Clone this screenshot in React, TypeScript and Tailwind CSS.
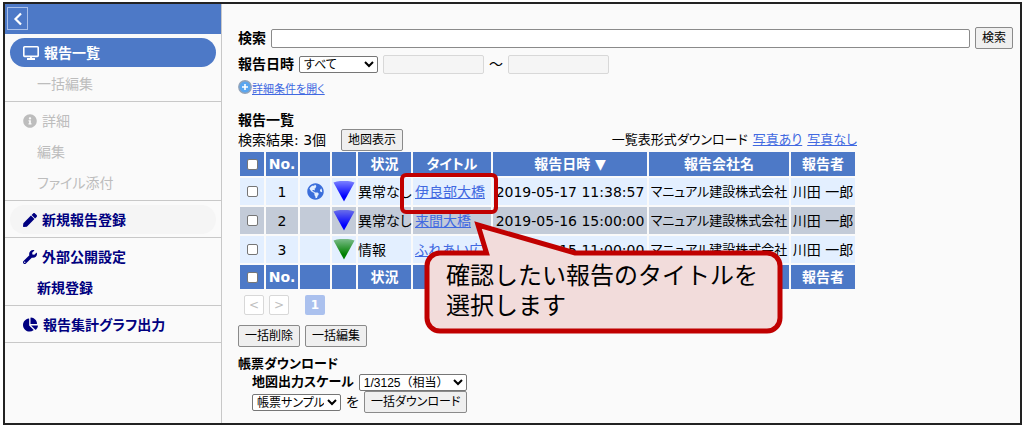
import React from 'react';
import { FaChartPie, FaGlobeAmericas, FaInfoCircle, FaPen, FaWrench } from 'react-icons/fa';
import clsx from 'clsx';

type Report = {
  no: number;
  published: boolean;
  color: string;
  status: string;
  title: string;
  date: string;
  company: string;
  reporter: string;
};

const reports: Report[] = [
  { no: 1, published: true, color: '#0000ff', status: '異常なし', title: '伊良部大橋', date: '2019-05-17 11:38:57', company: 'マニュアル建設株式会社', reporter: '川田 一郎' },
  { no: 2, published: false, color: '#0000ff', status: '異常なし', title: '来間大橋', date: '2019-05-16 15:00:00', company: 'マニュアル建設株式会社', reporter: '川田 一郎' },
  { no: 3, published: false, color: '#008000', status: '情報', title: 'ふれあい広場', date: '2019-05-15 11:00:00', company: 'マニュアル建設株式会社', reporter: '川田 一郎' },
];

const headLabels = ['No.', '', '', '状況', 'タイトル', '報告日時 ▼', '報告会社名', '報告者'];
const footLabels = ['No.', '', '', '状況', '', '', '', '報告者'];

const buttonClass = 'h-[22px] rounded-[2px] border border-[#8a8a8a] bg-[#efefef] px-[6px] text-xs leading-none text-black';
const selectClass =
  "h-[17px] rounded-[2px] border border-[#767676] bg-white text-xs leading-none text-black font-['Liberation_Sans','Noto_Sans_CJK_JP',sans-serif]";
const linkClass = 'text-[#4169e1] underline';
const checkboxClass = 'block mx-auto size-[11px] appearance-none rounded-[2px] border border-[#767676] bg-white';

const NavGroup: React.FC<{ children: React.ReactNode }> = ({ children }) => (
  <ul className="flex flex-col gap-[2px] border-b border-[#c8c8c8] px-[5px] pt-1 pb-[3px]">{children}</ul>
);

type NavItemProps = {
  label: string;
  icon?: React.ReactNode;
  state?: 'active' | 'disabled' | 'hover' | 'normal';
};

const NavItem: React.FC<NavItemProps> = ({ label, icon, state = 'normal' }) => (
  <li>
    <a
      href="#"
      className={clsx(
        'flex h-[29px] items-center gap-[5px] rounded-full text-sm',
        icon ? 'pl-[13px]' : 'pl-[27px]',
        state === 'active' && 'bg-[#4d79c7] font-bold text-white',
        state === 'disabled' && 'text-[#bdbdbd]',
        state === 'hover' && 'bg-[#f5f5f5] font-bold text-[#000080]',
        state === 'normal' && 'font-bold text-[#000080]',
      )}
    >
      {icon}
      {label}
    </a>
  </li>
);

const MonitorIcon: React.FC = () => (
  <svg viewBox="0 0 16 14" className="h-[14px] w-4" fill="none" stroke="currentColor" aria-hidden="true">
    <rect x="0.8" y="0.8" width="14.4" height="9.6" rx="0.8" strokeWidth="1.6" />
    <path d="M8 10.5 V13 M4 13 H12" strokeWidth="1.8" />
  </svg>
);

const Fan: React.FC<{ color: string; id: string }> = ({ color, id }) => (
  <svg viewBox="0 0 22 22" className="mx-auto block size-[22px]" aria-hidden="true">
    <defs>
      <linearGradient id={id} x1="0" y1="0" x2="0" y2="1">
        <stop offset="0" stopColor={color} stopOpacity="0.45" />
        <stop offset="0.75" stopColor={color} />
      </linearGradient>
    </defs>
    <path d="M0.5 1.5 Q11 -2 21.5 1.5 L11 20.5 Z" fill={`url(#${id})`} />
  </svg>
);

const HeadingRow: React.FC<{ labels: string[] }> = ({ labels }) => (
  <tr className="h-6 bg-[#4d79c7] text-white">
    <th><input type="checkbox" aria-label="すべて選択" className={checkboxClass} /></th>
    {labels.map((label, i) => (
      <th key={i}>{label}</th>
    ))}
  </tr>
);

const App: React.FC = () => {
  return (
    <div className="min-h-screen flex bg-white pt-[2px] pr-[2px] pb-[2px] pl-[3px] text-sm leading-5 text-black font-['DejaVu_Sans','Noto_Sans_CJK_JP',sans-serif] [font-feature-settings:'palt']">
      <div className="flex flex-1 border-2 border-[#222] bg-[#fafafa]">
        <aside className="w-[217px] shrink-0 border-r border-[#c8c8c8]">
          <div className="h-[30px] bg-[#4d79c7] px-[2px] py-[3px]">
            <button type="button" aria-label="メニューを閉じる" className="flex h-[23px] w-[21px] items-center justify-center border border-[#a9c0ea] text-white">
              <svg viewBox="0 0 10 14" className="h-[14px] w-[10px]" fill="none" stroke="currentColor" strokeWidth="2.2">
                <path d="M8 1.5 L2.5 7 L8 12.5" />
              </svg>
            </button>
          </div>
          <nav>
            <NavGroup>
              <NavItem label="報告一覧" icon={<MonitorIcon />} state="active" />
              <NavItem label="一括編集" state="disabled" />
            </NavGroup>
            <NavGroup>
              <NavItem label="詳細" icon={<FaInfoCircle size={14} />} state="disabled" />
              <NavItem label="編集" state="disabled" />
              <NavItem label="ファイル添付" state="disabled" />
            </NavGroup>
            <NavGroup>
              <NavItem label="新規報告登録" icon={<FaPen size={14} />} state="hover" />
            </NavGroup>
            <NavGroup>
              <NavItem label="外部公開設定" icon={<FaWrench size={14} />} />
              <NavItem label="新規登録" />
            </NavGroup>
            <NavGroup>
              <NavItem label="報告集計グラフ出力" icon={<FaChartPie size={15} />} />
            </NavGroup>
          </nav>
        </aside>

        <main className="min-w-0 flex-1 pt-[23px] pr-[7px] pl-4">
          <div className="flex items-center gap-[5px]">
            <label htmlFor="keyword" className="font-bold">検索</label>
            <input id="keyword" type="text" className="h-[19px] min-w-0 flex-1 rounded-[2px] border border-[#8a8a8a] bg-white px-1 text-xs" />
            <button type="button" className={buttonClass}>検索</button>
          </div>
          <div className="mt-[5px] flex items-center gap-[5px]">
            <label htmlFor="period" className="font-bold">報告日時</label>
            <select id="period" className={clsx(selectClass, 'w-[79px]')}>
              <option>すべて</option>
            </select>
            <input type="text" disabled aria-label="開始日" className="h-[19px] w-[101px] rounded-[2px] border border-[#d8d8d8] bg-[#f5f5f5]" />
            <span>～</span>
            <input type="text" disabled aria-label="終了日" className="h-[19px] w-[101px] rounded-[2px] border border-[#d8d8d8] bg-[#f5f5f5]" />
          </div>
          <div className="mt-[6px] flex items-start">
            <svg viewBox="0 0 14 14" className="size-[14px]" aria-hidden="true">
              <circle cx="7" cy="7" r="6.2" fill="#5aa6f0" stroke="#93a3b8" strokeWidth="1.4" />
              <path d="M7 4 V10 M4 7 H10" stroke="#fff" strokeWidth="1.6" />
            </svg>
            <a href="#" className={clsx(linkClass, 'text-[11px] leading-5')}>詳細条件を開く</a>
          </div>

          <h1 className="mt-[10px] font-bold">報告一覧</h1>
          <div className="flex h-5 w-[619px] items-center justify-between">
            <div className="flex items-center gap-[15px]">
              <span>検索結果: 3個</span>
              <button type="button" className={buttonClass}>地図表示</button>
            </div>
            <div className="flex gap-[5px] text-[13px]">
              <span>一覧表形式ダウンロード</span>
              <a href="#" className={linkClass}>写真あり</a>
              <a href="#" className={linkClass}>写真なし</a>
            </div>
          </div>

          <div className="relative">
            <table className="w-[619px] table-fixed border-separate border-spacing-[2px] leading-5 whitespace-nowrap [&_td]:p-0 [&_th]:p-0">
              <colgroup>
                <col className="w-6" />
                <col className="w-8" />
                <col className="w-[30px]" />
                <col className="w-6" />
                <col className="w-[53px]" />
                <col className="w-[78px]" />
                <col className="w-[154px]" />
                <col className="w-[140px]" />
                <col className="w-16" />
              </colgroup>
              <thead><HeadingRow labels={headLabels} /></thead>
              <tbody>
                {reports.map((r) => (
                  <tr key={r.no} className="h-[27px] bg-[#e3efff] even:bg-[#c3cbd8]">
                    <td><input type="checkbox" aria-label={r.title} className={checkboxClass} /></td>
                    <td className="text-center">{r.no}</td>
                    <td>{r.published && <FaGlobeAmericas size={17} className="mx-auto text-[#3a6edb]" />}</td>
                    <td><Fan color={r.color} id={`fan-${r.no}`} /></td>
                    <td><span>{r.status}</span></td>
                    <td><a href="#" className={clsx(linkClass, 'ml-[2px]')}>{r.title}</a></td>
                    <td className="text-center">{r.date}</td>
                    <td className="text-center text-[13px]">{r.company}</td>
                    <td className="text-center">{r.reporter}</td>
                  </tr>
                ))}
              </tbody>
              <tfoot><HeadingRow labels={footLabels} /></tfoot>
            </table>

            {/* highlighted title and its balloon */}
            <div className="pointer-events-none absolute top-[23px] left-[162px] h-[41px] w-[98px] rounded-md border-4 border-[#c00000]" />
            <div className="absolute top-[71px] left-[186px] h-[113px] w-[359px]">
              <svg viewBox="0 0 359 113" className="absolute inset-0 size-full" aria-hidden="true">
                <path
                  d="M16 32 H62.5 L54 4 L151 32 H343 A13 13 0 0 1 356 45 V97 A13 13 0 0 1 343 110 H16 A13 13 0 0 1 3 97 V45 A13 13 0 0 1 16 32 Z"
                  fill="#f2dcdb"
                  stroke="#c00000"
                  strokeWidth="5"
                />
              </svg>
              <p className="relative pt-10 pl-[22px] text-2xl leading-[30px] [font-feature-settings:normal]">
                確認したい報告のタイトルを
                <br />
                選択します
              </p>
            </div>
          </div>

          <div className="mt-1 flex gap-[5px] pl-[6px] text-xs">
            <button type="button" className="size-5 rounded-[2px] border border-[#d8d8d8] bg-white leading-none text-[#c0c0c0]">&lt;</button>
            <button type="button" className="size-5 rounded-[2px] border border-[#d8d8d8] bg-white leading-none text-[#c0c0c0]">&gt;</button>
            <button type="button" className="ml-[11px] size-5 rounded-[2px] bg-[#abc1ee] leading-none font-bold text-white">1</button>
          </div>
          <div className="mt-[10px] flex gap-[5px]">
            <button type="button" className={buttonClass}>一括削除</button>
            <button type="button" className={buttonClass}>一括編集</button>
          </div>

          <h2 className="mt-2 text-[13px] leading-[18px] font-bold">帳票ダウンロード</h2>
          <div className="flex h-[18px] items-center gap-[5px] pl-[14px]">
            <label htmlFor="scale" className="text-[13px] font-bold">地図出力スケール</label>
            <select id="scale" className={clsx(selectClass, 'w-[108px] [font-feature-settings:normal]')}>
              <option>1/3125（相当）</option>
            </select>
          </div>
          <div className="flex items-center gap-[5px] pl-[14px]">
            <select aria-label="帳票" className={clsx(selectClass, 'w-[89px]')}>
              <option>帳票サンプル</option>
            </select>
            <span>を</span>
            <button type="button" className={buttonClass}>一括ダウンロード</button>
          </div>
        </main>
      </div>
    </div>
  );
};

export default App;
